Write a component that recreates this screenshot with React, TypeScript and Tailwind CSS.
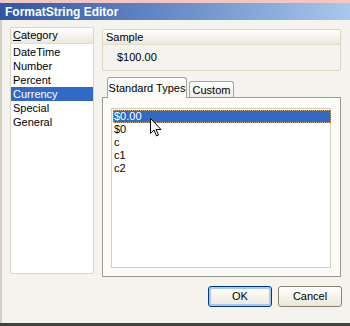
export default function App() {
  const categories = ['DateTime', 'Number', 'Percent', 'Currency', 'Special', 'General']
  const types = ['$0.00', '$0', 'c', 'c1', 'c2']

  return (
    <div
      className="w-[350px] h-[326px] flex flex-col bg-[#f4f3ee] text-[11px] text-black overflow-hidden"
      style={{ fontFamily: '"Liberation Sans", Arial, sans-serif' }}
    >
      {/* top edge */}
      <div className="h-[3px] bg-[#f2c6c2]" />
      {/* title bar */}
      <div className="h-[17px] flex items-center pl-[5px] bg-gradient-to-r from-[#2f56a4] via-[#6a8cc8] to-[#a8c8ec] text-white font-bold text-[12px]">
        FormatString Editor
      </div>

      <div className="flex-1 flex flex-col border-l-2 border-[#d4d0c4]">
        <div className="flex pl-[8px] pt-[7px]">
          {/* category */}
          <div className="w-[84px] h-[247px] flex flex-col border border-[#dcd6c2] rounded-[2px] bg-white">
            <div className="h-[16px] flex items-center pl-[2px] bg-gradient-to-b from-white to-[#ebe8dc] border-b border-[#e2dccb]">
              <span><span className="underline">C</span>ategory</span>
            </div>
            <div className="flex flex-col pt-[1px]">
              {categories.map((c) => (
                <div
                  key={c}
                  className={`h-[14px] leading-[14px] pl-[2px] ${c === 'Currency' ? 'bg-[#316ac5] text-white' : ''}`}
                >
                  {c}
                </div>
              ))}
            </div>
          </div>

          {/* right side */}
          <div className="ml-[8px] w-[239px] flex flex-col">
            <div className="mt-[2px] h-[42px] flex flex-col border border-[#dcd6c2] rounded-[2px]">
              <div className="h-[15px] flex items-center pl-[3px] bg-gradient-to-b from-white to-[#ebe8dc] border-b border-[#e2dccb]">
                Sample
              </div>
              <div className="flex-1 flex items-center pl-[14px]">$100.00</div>
            </div>

            {/* tabs */}
            <div className="mt-[6px] flex items-end pl-[5px] h-[21px]">
              <div className="relative z-10 h-[21px] w-[80px] flex items-center justify-center bg-[#fbfbf8] border border-b-0 border-[#a8a498] rounded-t-[3px]">
                Standard Types
              </div>
              <div className="ml-[2px] h-[17px] w-[45px] flex items-center justify-center bg-gradient-to-b from-white to-[#ecebe6] border border-b-0 border-[#a8a498] rounded-t-[3px]">
                Custom
              </div>
            </div>
            <div className="relative h-[180px] -mt-px border border-[#a09a8c] bg-[#fbfbf8] pl-[8px] pt-[10px]">
              <div className="w-[220px] h-[160px] bg-white border border-[#d6d0c0] pt-px pl-px">
                {types.map((t, i) => (
                  <div
                    key={t}
                    className={`h-[13px] leading-[13px] pl-px ${i === 0 ? 'w-[218px] bg-[#316ac5] text-white outline outline-1 outline-dotted outline-[#c8a878] -outline-offset-1' : ''}`}
                  >
                    {t}
                  </div>
                ))}
              </div>
              {/* mouse pointer */}
              <svg
                className="absolute left-[47px] top-[20px]"
                width="12"
                height="19"
                viewBox="0 0 12 19"
              >
                <path
                  d="M0.5 0.5 L0.5 15.5 L4 12 L6.5 18 L8.5 17 L6 11.5 L11 11.5 Z"
                  fill="white"
                  stroke="black"
                  strokeWidth="1"
                  strokeLinejoin="miter"
                />
              </svg>
            </div>
          </div>
        </div>

        {/* buttons */}
        <div className="flex justify-end gap-[6px] pr-[8px] mt-[9px]">
          <button className="w-[64px] h-[21px] rounded-[3px] border border-[#003c74] bg-gradient-to-b from-white to-[#ece9d8] shadow-[inset_0_0_0_2px_#a8c8f0] text-[11px]">
            OK
          </button>
          <button className="w-[64px] h-[21px] rounded-[3px] border border-[#8a8070] bg-gradient-to-b from-white to-[#ece9d8] text-[11px]">
            Cancel
          </button>
        </div>
        <div className="flex-1" />
      </div>
      <div className="h-[3px] bg-[#404040]" />
    </div>
  )
}
